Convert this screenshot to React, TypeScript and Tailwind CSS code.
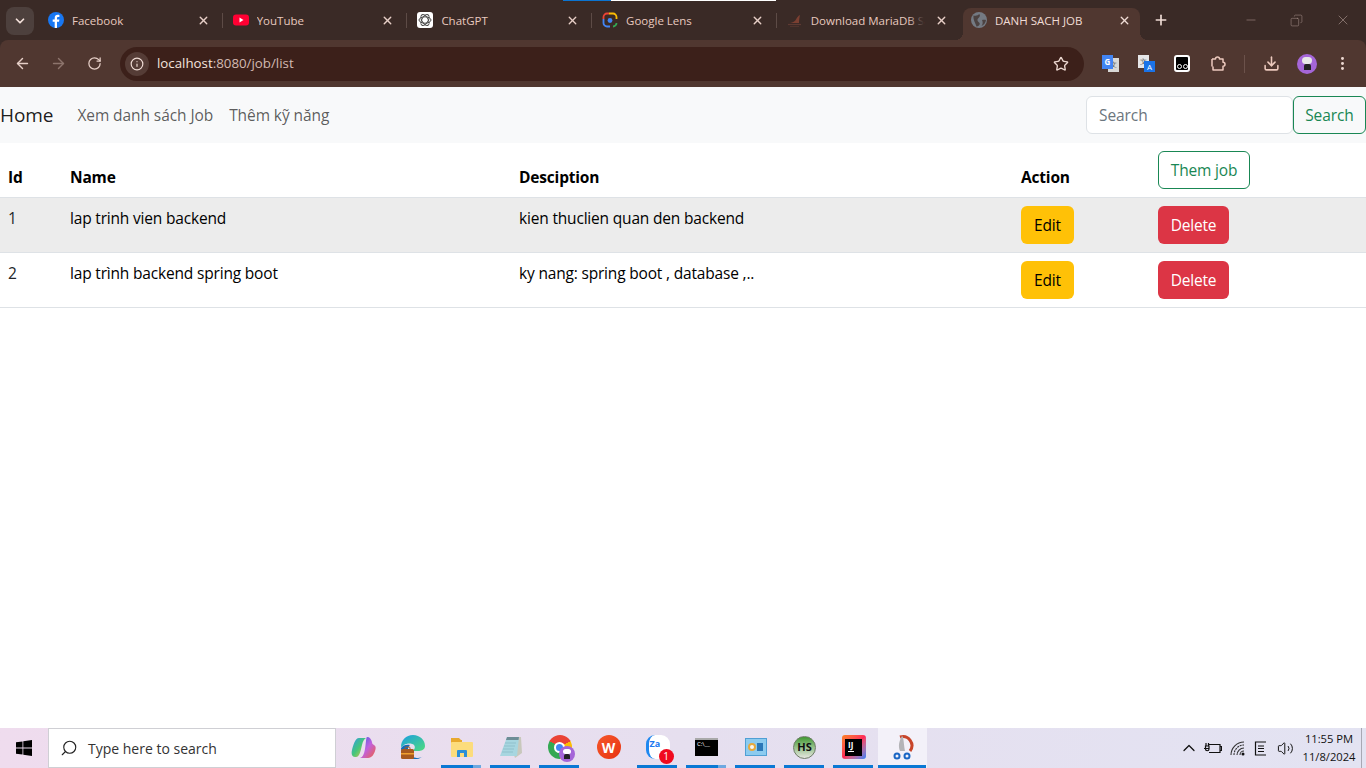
import React from 'react';
import { ArrowLeft, ArrowRight, RotateCw, Info, Star, Download, MoreVertical, X, Plus, Minus, ChevronDown, ChevronUp, Search, Copy, Volume2 } from 'lucide-react';

const font = 'font-["Open_Sans","Noto_Sans",sans-serif]';

const Facebook = () => (
    <svg width="16" height="16" viewBox="0 0 16 16">
        <circle cx="8" cy="8" r="8" fill="#1877f2" />
        <path d="M9 16V9.800h2l.4-2.300H9V6.200c0-.7.3-1.200 1.300-1.200h1.100V3c-.4-.1-1-.2-1.700-.2-1.800 0-3 1.100-3 3.100v1.600H4.700v2.300h2V16z" fill="#fff" />
    </svg>
);

const YouTube = () => (
    <svg width="16" height="16" viewBox="0 0 16 16">
        <rect y="2.500" width="16" height="11" rx="3" fill="#ff0033" />
        <path d="M6.500 5.500v5l4-2.500z" fill="#fff" />
    </svg>
);

const ChatGpt = () => (
    <svg width="16" height="16" viewBox="0 0 16 16">
        <rect width="16" height="16" rx="3" fill="#fff" />
        <g fill="none" stroke="#4a4a4a" strokeWidth="1">
            <ellipse cx="8" cy="8" rx="6" ry="3.200" />
            <ellipse cx="8" cy="8" rx="6" ry="3.200" transform="rotate(60 8 8)" />
            <ellipse cx="8" cy="8" rx="6" ry="3.200" transform="rotate(120 8 8)" />
        </g>
    </svg>
);

const Lens = () => (
    <svg width="16" height="16" viewBox="0 0 16 16" fill="none" strokeWidth="1.800">
        <path d="M1.500 7V5A3.500 3.500 0 0 1 5 1.500h2" stroke="#ea4335" />
        <path d="M7 1.500h4A3.500 3.500 0 0 1 14.500 5v2" stroke="#fbbc04" />
        <path d="M1.500 7v4A3.500 3.500 0 0 0 5 14.500h3" stroke="#4285f4" />
        <path d="M14.500 11a3.500 3.500 0 0 1-3.500 3.500" stroke="#34a853" />
        <circle cx="8" cy="8.500" r="2.400" fill="#4285f4" stroke="none" />
    </svg>
);

const Maria = () => (
    <svg width="16" height="16" viewBox="0 0 16 16">
        <path d="M3 11c3-.5 5-1.500 6-3.500S11 4 13 3c-.5 2.500-1 4.500-1 8z" fill="#7b3f31" />
        <path d="M1 12.500h13" stroke="#5d3a32" strokeWidth="1.200" />
        <path d="M3 14.500h9" stroke="#4f332c" strokeWidth="1" />
    </svg>
);

const DarkGlobe = () => (
    <svg width="16" height="16" viewBox="0 0 16 16">
        <circle cx="8" cy="8" r="8" fill="#747a83" />
        <path d="M2.500 3.500C5 4 7.500 3.500 8 2c1.500.5 1 3-.5 4S6 9 8 10.500s-.5 4-2.500 4C4.500 11 2 8 2.500 3.500z" fill="#4c4241" />
        <path d="M11 8c1.500-.5 3-.5 4 0-.5 3-2 5-4.500 6 1.500-2 1.500-4 .5-6z" fill="#4c4241" />
    </svg>
);

const tabs = [
    { title: 'Facebook', icon: <Facebook /> },
    { title: 'YouTube', icon: <YouTube /> },
    { title: 'ChatGPT', icon: <ChatGpt /> },
    { title: 'Google Lens', icon: <Lens /> },
    { title: 'Download MariaDB S', icon: <Maria />, fade: true },
];

const TabStrip = () => (
    <div className="relative h-[40px] flex items-end shrink-0">
        {/* loading line on top of the Google Lens tab */}
        <div className="absolute top-0 left-[563px] h-px w-[48px] bg-[#0b74d1]" />
        <div className="absolute top-0 left-[611px] h-px w-[165px] bg-white" />
        <div className="w-[38px] h-[40px] pl-[6px] pt-[7px] shrink-0">
            <div className="w-[28px] h-[28px] rounded-lg bg-[#4d403d] flex items-center justify-center">
                <ChevronDown size={14} strokeWidth={3} className="text-[#f3e0da]" />
            </div>
        </div>
        {tabs.map((tab, i) => (
            <div key={tab.title} className="w-[184.700px] h-[40px] flex items-center pl-[10px] pr-[13px] shrink-0 relative">
                {tab.icon}
                <span className="ml-[8px] flex-1 pt-px text-[11.500px] text-[#e8c9bf] whitespace-nowrap overflow-hidden">
                    <span className="relative inline-block">
                        {tab.title}
                        {tab.fade && <span className="absolute right-0 top-0 bottom-0 w-[16px] bg-gradient-to-r from-transparent to-[#3a2a26]" />}
                    </span>
                </span>
                <X size={13} strokeWidth={2.500} className="text-[#e8cfc7] ml-[4px]" />
                {i < 4 && <div className="absolute right-0 top-[13px] h-[15px] w-px bg-[#5d4b46]" />}
            </div>
        ))}
        <div className="w-[177px] h-[32px] ml-[1.500px] pb-[8px] rounded-t-lg bg-[#503730] flex items-center pl-[8px] pr-[9px] shrink-0 relative">
            <div className="absolute -left-[8px] bottom-0 w-[8px] h-[8px] bg-[radial-gradient(circle_at_0_0,transparent_8px,#503730_8px)]" />
            <div className="absolute -right-[8px] bottom-0 w-[8px] h-[8px] bg-[radial-gradient(circle_at_100%_0,transparent_8px,#503730_8px)]" />
            <DarkGlobe />
            <span className="ml-[8px] flex-1 pt-px text-[11.500px] text-[#f0dcd5] whitespace-nowrap">DANH SACH JOB</span>
            <X size={13} strokeWidth={2.500} className="text-[#f0dcd5]" />
        </div>
        <div className="h-[40px] flex items-center ml-[13px]">
            <Plus size={16} strokeWidth={2.500} className="text-[#f0dcd5]" />
        </div>
        <div className="flex-1" />
        <div className="h-[40px] flex items-center gap-[32px] pr-[15px]">
            <Minus size={14} strokeWidth={1} className="text-[#a8928c]" />
            <Copy size={13} strokeWidth={1} className="text-[#a8928c] scale-x-[-1]" />
            <X size={16} strokeWidth={1} className="text-[#a8928c]" />
        </div>
    </div>
);

const Toolbar = () => (
    <div className="h-[47px] bg-[#503730] rounded-t-lg shrink-0 flex items-center pl-[14px]">
        <ArrowLeft size={17} className="text-[#e6cfc7]" />
        <ArrowRight size={17} className="text-[#8d746c] ml-[19px]" />
        <RotateCw size={15} className="text-[#e6cfc7] ml-[20px]" />
        <div className="ml-[18px] w-[964px] h-[34px] rounded-full bg-[#3c201a] flex items-center pl-[5px] pr-[15px]">
            <div className="w-[24px] h-[24px] rounded-full bg-[#553c36] flex items-center justify-center">
                <Info size={14} className="text-[#f0dcd5]" />
            </div>
            <span className="ml-[8px] flex-1 text-[13.300px] text-[#f3e3dd]">
                localhost<span className="text-[#d3bab2]">:8080/job/list</span>
            </span>
            <Star size={16} className="text-[#ecd8d1]" />
        </div>
        {/* google translate */}
        <div className="ml-[18px] relative w-[17px] h-[17px]">
            <div className="absolute right-0 bottom-0 w-[11px] h-[14px] bg-[#d8d8d6] text-[#555] text-[7px] leading-[14px] text-center">文</div>
            <div className="absolute left-0 top-0 w-[11px] h-[14px] bg-[#4285f4] text-white text-[8px] font-bold leading-[14px] text-center">G</div>
        </div>
        {/* page translator */}
        <div className="ml-[19px] relative w-[17px] h-[17px]">
            <div className="absolute left-0 top-0 w-[11px] h-[13px] bg-[#e6e6e8] text-[#555] text-[7px] leading-[13px] text-center">文</div>
            <div className="absolute right-0 bottom-0 w-[11px] h-[11px] bg-[#1a73e8] text-white text-[8px] leading-[11px] text-center">A</div>
        </div>
        <div className="ml-[19px] w-[16px] h-[17px] bg-black border-2 border-white rounded-[3px] flex items-end justify-center gap-px pb-px">
            <div className="w-[5px] h-[5px] border border-white rounded-full" />
            <div className="w-[5px] h-[5px] border border-white rounded-full" />
        </div>
        <svg className="ml-[20px]" width="17" height="17" viewBox="0 0 17 17" fill="none" stroke="#ecc9bd" strokeWidth="1.500" strokeLinejoin="round">
            <path d="M2 4h3.500a2 2 0 0 1 4 0H13v3.200a2 2 0 0 1 0 4V15H3v-3.500M2 4v7.500" />
        </svg>
        <div className="ml-[17px] w-px h-[18px] bg-[#6c524b]" />
        <Download size={17} strokeWidth={2.200} className="ml-[18px] text-[#ecc9bd]" />
        <div className="ml-[17px] w-[20px] h-[20px] rounded-full bg-[#a566d8] flex flex-col items-center justify-center">
            <div className="w-[10px] h-[7px] rounded-full bg-[#e8e8e8]" />
            <div className="w-[7px] h-[6px] rounded-t-[2px] bg-[#222]" />
        </div>
        <MoreVertical size={17} strokeWidth={2.200} className="ml-[17px] text-[#ecd8d1]" />
    </div>
);

const Navbar = () => (
    <nav className="h-[56px] bg-[#f8f9fa] shrink-0 flex items-center text-[15.500px] leading-6 tracking-[-0.080px]">
        <span className="text-[19px] text-black/90 mr-[16px]">Home</span>
        <a className="px-[8px] text-black/65">Xem danh sách Job</a>
        <a className="px-[8px] text-black/65">Thêm kỹ năng</a>
        <div className="flex-1" />
        <div className="w-[207px] h-[38px] bg-white border border-[#dee2e6] rounded-[6px] px-[12px] flex items-center text-[#6c757d]">Search</div>
        <button className="h-[38px] w-[73px] border border-[#198754] rounded-[6px] text-[#198754]">Search</button>
    </nav>
);

const rows = [
    { id: 1, name: 'lap trinh vien backend', desc: 'kien thuclien quan den backend' },
    { id: 2, name: 'lap trình backend spring boot', desc: 'ky nang: spring boot , database ,..' },
];

const JobTable = () => (
    <table className="w-full table-fixed border-collapse text-[15.500px] leading-6 tracking-[-0.180px] text-[#212529]">
        <colgroup>
            <col className="w-[62px]" />
            <col className="w-[449px]" />
            <col className="w-[502px]" />
            <col className="w-[137px]" />
            <col />
        </colgroup>
        <thead>
            <tr className="border-b border-[#dee2e6]">
                <th className="px-2 py-2 text-left text-black font-bold align-bottom">Id</th>
                <th className="px-2 py-2 text-left text-black font-bold align-bottom">Name</th>
                <th className="px-2 py-2 text-left text-black font-bold align-bottom">Desciption</th>
                <th className="px-2 py-2 text-left text-black font-bold align-bottom">Action</th>
                <th className="px-2 py-2 text-left align-top font-normal">
                    <button className="block h-[38px] w-[92px] border border-[#198754] rounded-[6px] text-[#198754]">Them job</button>
                </th>
            </tr>
        </thead>
        <tbody>
            {rows.map((row, i) => (
                <tr key={row.id} className={`border-b border-[#dee2e6] ${i === 0 ? 'bg-[#ececec]' : 'bg-white'}`}>
                    <td className="px-2 py-2 align-top">{row.id}</td>
                    <td className="px-2 py-2 align-top text-black">{row.name}</td>
                    <td className="px-2 py-2 align-top text-black">{row.desc}</td>
                    <td className="px-2 py-2 align-top">
                        <button className="block h-[38px] w-[53px] bg-[#ffc107] rounded-[6px] text-black">Edit</button>
                    </td>
                    <td className="px-2 py-2 align-top">
                        <button className="block h-[38px] w-[71px] bg-[#dc3545] rounded-[6px] text-white">Delete</button>
                    </td>
                </tr>
            ))}
        </tbody>
    </table>
);

const Slot = ({ children, line = true, active = false, stacked = false }: { children: React.ReactNode; line?: boolean; active?: boolean; stacked?: boolean }) => (
    <div className={`relative w-[49px] h-[40px] flex items-center justify-center shrink-0 pb-[2px] ${active ? 'bg-[#f3f1f9]' : ''}`}>
        {children}
        {line && <div className={`absolute bottom-0 h-[3px] bg-[#0a78d4] ${active ? 'left-0 right-px' : 'left-[4px] right-[5px]'}`} />}
        {stacked && <div className="absolute bottom-0 right-[5px] w-[8px] h-[3px] bg-[#6ea8e0]" />}
    </div>
);

const Copilot = () => (
    <svg width="25" height="23" viewBox="0 0 25 23">
        <defs>
            <linearGradient id="cpA" x1="0" y1="0" x2="1" y2="1">
                <stop offset="0" stopColor="#2f9be8" />
                <stop offset="0.5" stopColor="#45c67a" />
                <stop offset="1" stopColor="#f6c23c" />
            </linearGradient>
            <linearGradient id="cpB" x1="0" y1="0" x2="1" y2="1">
                <stop offset="0" stopColor="#3a5fe0" />
                <stop offset="0.5" stopColor="#c060e0" />
                <stop offset="1" stopColor="#f0603c" />
            </linearGradient>
        </defs>
        <path d="M8 2h7c-2 1-3 3-4 7s-2 12-6 12H4C1 21 0 18 1 14S4 2 8 2z" fill="url(#cpA)" />
        <path d="M16 1c3 0 4 2 5 5 0 2 1 2 2 3 2 1 2 3 1 6s-3 7-7 7H9c3-1 4-4 5-9s1-12 2-12z" fill="url(#cpB)" />
    </svg>
);

const Edge = () => (
    <svg width="26" height="26" viewBox="0 0 26 26">
        <defs>
            <linearGradient id="edgeA" x1="0" y1="0" x2="1" y2="1">
                <stop offset="0" stopColor="#1b9de2" />
                <stop offset="1" stopColor="#4fdc7c" />
            </linearGradient>
        </defs>
        <path d="M1 13C1 6 6 1 13 1s12 5 12 11c0 4-4 5-7 5H12c2-1 4-3 2-6-2-2-7-2-10 0-1 1-2 2-3 2z" fill="url(#edgeA)" />
        <path d="M1 14c2-3 6-4 9-3-2 2-3 5-1 8 2 4 6 5 9 5 2 0 4-1 5-2-3 3-6 3-9 3-7 0-13-5-13-11z" fill="#0f6cbd" />
        <rect x="1" y="15" width="13" height="10" rx="1.500" fill="#a8591f" />
        <rect x="1" y="19" width="13" height="1.500" fill="#f0a030" />
        <rect x="5" y="13" width="5" height="3" rx="1" fill="none" stroke="#a8591f" strokeWidth="1" />
    </svg>
);

const Folder = () => (
    <svg width="22" height="20" viewBox="0 0 22 20">
        <path d="M0 1h8l2 2h1v3H0z" fill="#e8a92e" />
        <rect y="5" width="22" height="15" rx="1" fill="#fcdc7c" />
        <path d="M6 20v-6a1 1 0 0 1 1-1h8a1 1 0 0 1 1 1v6h-3v-4H9v4z" fill="#2a8fd8" />
    </svg>
);

const Notepad = () => (
    <svg width="24" height="23" viewBox="0 0 24 23">
        <path d="M9 1h13l1 16-7 5z" fill="#c8c8bc" />
        <path d="M8 1h12l-2 19H1z" fill="#a7d6e0" />
        <path d="M8 1h12l-.5 3H7z" fill="#6d8d96" />
        <path d="M6 7h11M5 10h11M4 13h11M3 16h11" stroke="#8fc0cc" strokeWidth="1" />
    </svg>
);

const Taskbar = () => (
    <div className="h-[40px] shrink-0 flex items-center bg-gradient-to-r from-[#efdcee] via-[#e6dfef] to-[#e3e3f2]">
        <div className="w-[48px] h-[40px] flex items-center justify-center">
            <svg width="16" height="16" viewBox="0 0 16 16" fill="#000">
                <path d="M0 2.300 6.500 1.400v6.200H0zM7.300 1.300 16 0v7.600H7.300zM0 8.400h6.500v6.200L0 13.700zM7.300 8.400H16V16l-8.700-1.200z" />
            </svg>
        </div>
        <div className="w-[288px] h-[40px] bg-white border border-[#cfcfd4] flex items-center pl-[11px]">
            <Search size={18} strokeWidth={1.500} className="text-[#222] scale-x-[-1]" />
            <span className="ml-[10px] text-[14px] text-[#333]">Type here to search</span>
        </div>
        <div className="ml-[3px] flex items-center">
            <Slot line={false}><Copilot /></Slot>
            <Slot line={false}><Edge /></Slot>
            <Slot stacked><Folder /></Slot>
            <Slot><Notepad /></Slot>
            <Slot>
                <div className="relative w-[24px] h-[24px] rounded-full bg-[conic-gradient(from_-60deg,#ea4335_0_120deg,#fbbc04_120deg_240deg,#34a853_240deg)] flex items-center justify-center">
                    <div className="w-[11px] h-[11px] rounded-full bg-[#4285f4] border-2 border-white" />
                    <div className="absolute right-[-3px] bottom-[-3px] w-[16px] h-[16px] rounded-full bg-[#a566d8] flex flex-col items-center justify-center">
                        <div className="w-[8px] h-[5px] rounded-full bg-white" />
                        <div className="w-[6px] h-[5px] rounded-t-[2px] bg-[#222]" />
                    </div>
                </div>
            </Slot>
            <Slot line={false}>
                <div className="w-[24px] h-[24px] rounded-full bg-gradient-to-br from-[#f5562a] to-[#e8330f] flex items-center justify-center text-white text-[14px] font-bold">W</div>
            </Slot>
            <Slot>
                <div className="relative w-[24px] h-[24px] rounded-[9px] bg-white border-l-[3px] border-[#1e88f0] text-[#1e78f0] text-[9px] font-bold leading-[17px] pl-px">
                    Za
                    <div className="absolute right-[-4px] bottom-[-5px] w-[15px] h-[15px] rounded-full bg-[#f00a1e] text-white text-[10px] leading-[15px] text-center font-normal">1</div>
                </div>
            </Slot>
            <Slot stacked>
                <div className="w-[23px] h-[18px] bg-black border-t-[2px] border-[#a9a9a9] text-white text-[6px] leading-[8px] pl-[2px]">C:\__</div>
            </Slot>
            <Slot>
                <div className="w-[22px] h-[18px] bg-[#8ccbef] border border-[#4f9fd4] flex items-center justify-center gap-px">
                    <div className="w-[8px] h-[8px] rounded-full bg-[#f7f7f7] border-2 border-[#e8a93c]" />
                    <div className="w-[6px] h-[8px] bg-[#2a77b8]" />
                </div>
            </Slot>
            <Slot>
                <div className="w-[23px] h-[23px] rounded-full bg-gradient-to-b from-[#3e9a2e] to-[#e6e6e0] border border-[#6d7a66] flex items-center justify-center">
                    <span className="text-[#111] text-[11px] font-bold">HS</span>
                </div>
            </Slot>
            <Slot>
                <div className="w-[24px] h-[24px] rounded-[3px] bg-gradient-to-br from-[#fc801d] via-[#fe2857] to-[#087cfa] flex items-center justify-center">
                    <div className="w-[17px] h-[17px] bg-black text-white text-[8px] font-bold leading-[11px] pl-[3px]">
                        IJ
                        <div className="w-[6px] h-px bg-white mt-px" />
                    </div>
                </div>
            </Slot>
            <Slot active>
                <svg width="24" height="26" viewBox="0 0 24 26" fill="none">
                    <path d="M9 3a9 9 0 0 1 10 14" stroke="#c8452a" strokeWidth="3" />
                    <path d="M9 17C7 12 8 7 11 2l1 1c1 5 1 10 2 14z" fill="#b4b4b8" />
                    <circle cx="6" cy="22" r="2.500" stroke="#1a66c4" strokeWidth="2" />
                    <circle cx="16" cy="22" r="2.500" stroke="#1a66c4" strokeWidth="2" />
                </svg>
            </Slot>
        </div>
        <div className="flex-1" />
        <div className="flex items-center text-[#111]">
            <ChevronUp size={20} strokeWidth={1.500} className="-mx-px" />
            <svg className="ml-[6px]" width="18" height="14" viewBox="0 0 18 14" fill="none" stroke="#111" strokeWidth="1.200">
                <path d="M5 3.500h11v8H5M16 5.500h1.500v4H16" />
                <path d="M0 7.500h5M2 5V2M4.500 5V2M1.500 5h3.500v3a1.500 1.500 0 0 1-3.500 0z" />
            </svg>
            <svg className="ml-[8px]" width="16" height="15" viewBox="0 0 16 15" fill="none" stroke="#333" strokeWidth="1.100">
                <path d="M1 14A13 13 0 0 1 14 1" />
                <path d="M4 14A10 10 0 0 1 14 4" strokeDasharray="2 .8" />
                <path d="M7 14A7 7 0 0 1 14 7" />
                <path d="M10 14a4 4 0 0 1 4-4" />
                <circle cx="13" cy="13" r="1.500" fill="#111" stroke="none" />
            </svg>
            <svg className="ml-[8px]" width="13" height="15" viewBox="0 0 13 15" fill="none" stroke="#111" strokeWidth="1.200">
                <path d="M12 1H1.500v13H12M4 5h6M4 7.500h6M4 10.500h6" />
            </svg>
            <Volume2 size={17} strokeWidth={1.400} className="ml-[9.500px]" />
        </div>
        <div className="w-[64px] ml-[3.500px] text-[11.200px] leading-[18px] text-center text-[#111] flex flex-col">
            <span>11:55 PM</span>
            <span>11/8/2024</span>
        </div>
        <div className="w-[5px] h-[40px] border-l border-[#a8a8b4]" />
    </div>
);

export default function App() {
    return (
        <div className={`w-[1366px] h-[768px] overflow-hidden flex flex-col bg-white ${font}`}>
            <div className="bg-[#3a2a26] shrink-0">
                <TabStrip />
                <Toolbar />
            </div>
            <Navbar />
            <JobTable />
            <div className="flex-1" />
            <Taskbar />
        </div>
    );
}
